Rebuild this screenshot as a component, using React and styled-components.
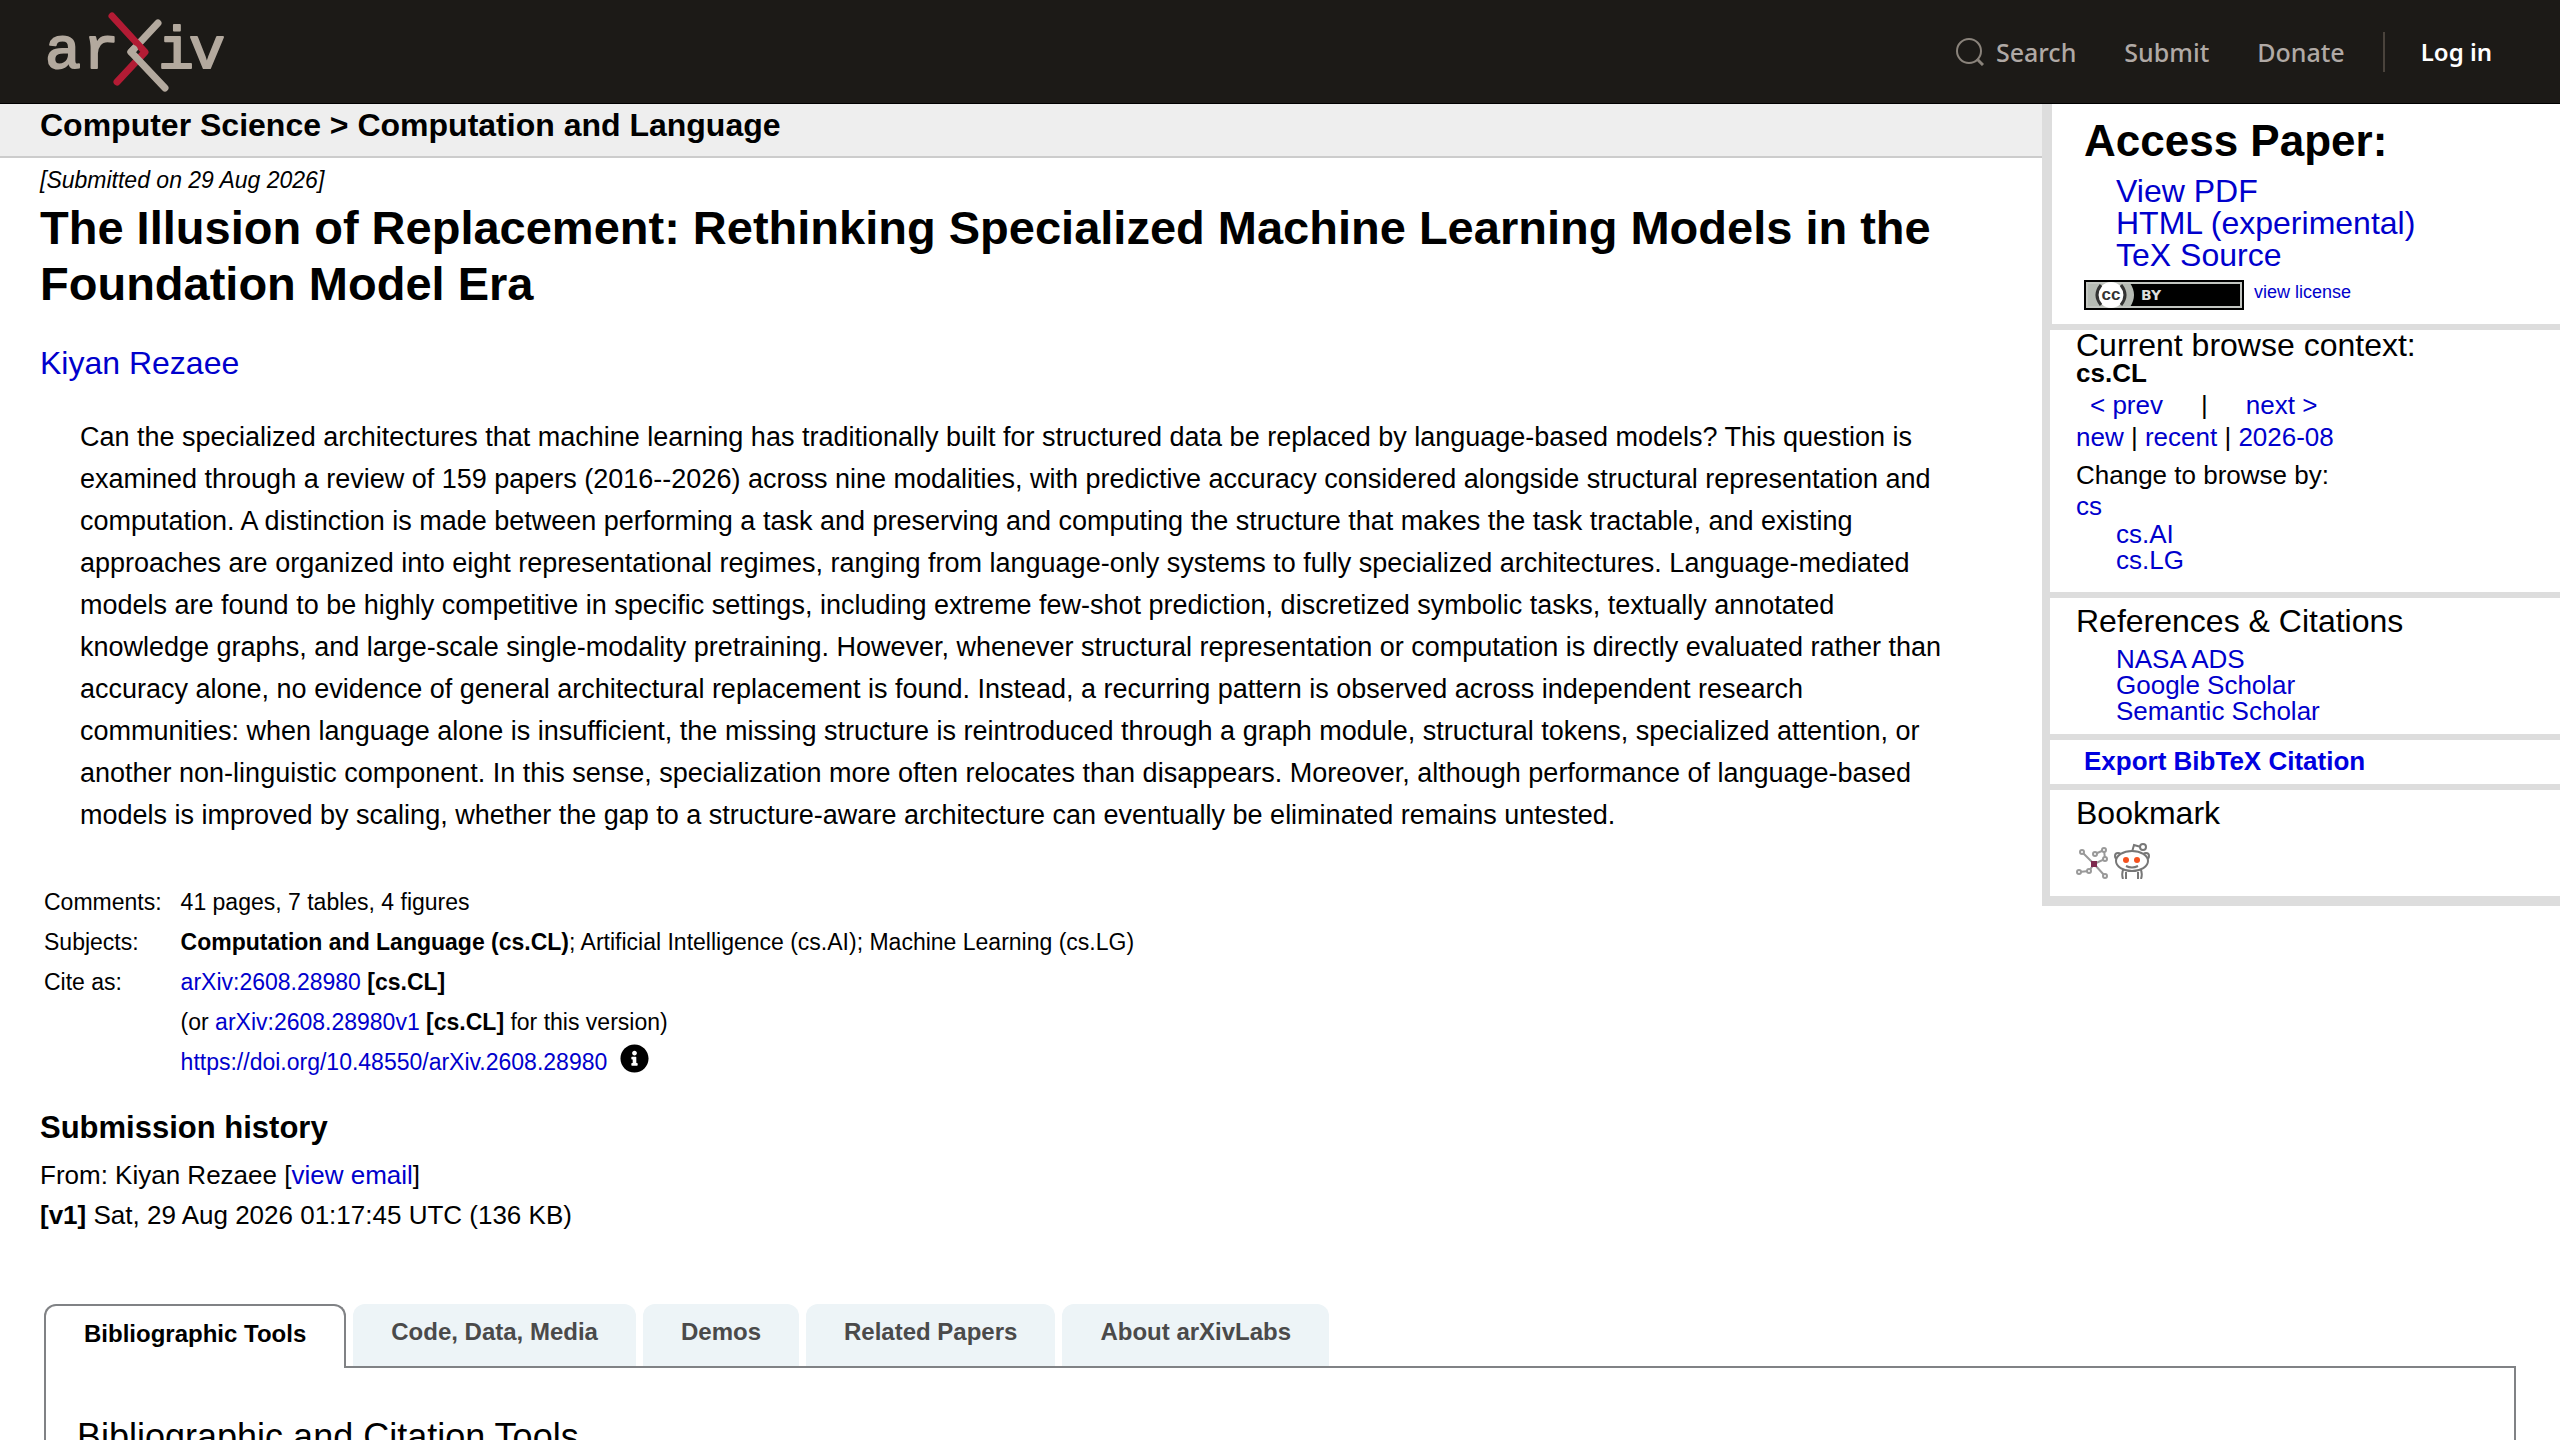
import React, { useState } from 'react';
import styled, { createGlobalStyle } from 'styled-components';
import { FaInfoCircle } from 'react-icons/fa';

const GlobalStyle = createGlobalStyle`
  * {
    box-sizing: border-box;
  }

  body {
    margin: 0;
    background: #fff;
    color: #000;
    font-family: "Liberation Sans", Helvetica, Arial, sans-serif;
    font-size: 26px;
  }
`;

const Page = styled.div`
  height: 100vh;
  overflow: hidden;
`;

const Link = styled.a`
  color: #0000cc;
  text-decoration: none;
`;

const Header = styled.header`
  display: flex;
  align-items: center;
  justify-content: space-between;
  height: 104px;
  padding: 0 68px 0 40px;
  background: #1c1a17;
  border-bottom: 1px solid #000;
`;

const LogoLink = styled.a`
  display: flex;
`;

const Nav = styled.nav`
  display: flex;
  align-items: center;
  gap: 48px;
  font-family: "Noto Sans", sans-serif;
`;

const NavLink = styled.a`
  display: flex;
  align-items: center;
  gap: 12px;
  color: ${props => (props.$strong ? '#fff' : '#b0a9a5')};
  font-size: ${props => (props.$strong ? 24 : 25)}px;
  font-weight: ${props => (props.$strong ? 600 : 500)};
  line-height: 40px;
  text-decoration: none;
`;

const LoginArea = styled.div`
  padding-left: 36px;
  margin-left: -10px;
  border-left: 2px solid #4a433c;
`;

const Columns = styled.div`
  display: flex;
  align-items: flex-start;
`;

const Main = styled.main`
  flex: 1;
  min-width: 0;
`;

const SubjectBar = styled.div`
  padding: 3px 40px 13px;
  background: #eee;
  border-bottom: 2px solid #ccc;
  font-size: 32px;
  font-weight: bold;
  line-height: 36px;
`;

const Article = styled.article`
  padding: 7px 40px 0;
`;

const Dateline = styled.div`
  font-size: 23px;
  font-style: italic;
  line-height: 30px;
`;

const Title = styled.h1`
  margin: 5px 0 32px;
  font-size: 47px;
  line-height: 56px;
`;

const Authors = styled.div`
  font-size: 32px;
  line-height: 38px;
`;

const Abstract = styled.blockquote`
  margin: 34px 44px 46px 40px;
  font-size: 27px;
  line-height: 42px;
`;

const MetaTable = styled.table`
  border-collapse: collapse;
  font-size: 23px;
  line-height: 40px;

  th,
  td {
    padding: 0 4px;
    font-weight: normal;
    text-align: left;
    vertical-align: top;
  }

  th {
    padding-right: 15px;
  }
`;

const InfoIcon = styled(FaInfoCircle)`
  margin-left: 13px;
  vertical-align: -3px;
  font-size: 29px;
`;

const HistoryTitle = styled.h2`
  margin: 28px 0 9px;
  font-size: 31px;
  line-height: 36px;
`;

const HistoryLine = styled.div`
  line-height: 40px;
`;

const Sidebar = styled.aside`
  flex: 0 0 518px;
  border-left: 8px solid #ddd;
  border-bottom: 4px solid #ddd;
`;

const Box = styled.section`
  padding: ${props => props.$pad};
  border-bottom: 6px solid #ddd;
`;

const AccessBox = styled(Box)`
  border-left: 2px solid #ddd;
`;

const AccessTitle = styled.h2`
  margin: 0 0 9px;
  font-size: 44px;
  line-height: 50px;
`;

const BoxTitle = styled.h3`
  margin: 0;
  font-size: 32px;
  font-weight: normal;
  line-height: ${props => (props.$tight ? 30 : 36)}px;
`;

const LinkList = styled.ul`
  margin: 0;
  padding: 0 0 0 ${props => (props.$large ? 32 : 40)}px;
  list-style: none;
  font-size: ${props => (props.$large ? 32 : 26)}px;
  line-height: ${props => (props.$large ? 32 : 26)}px;
`;

const RefList = styled(LinkList)`
  margin-top: 7px;
`;

const License = styled.div`
  display: flex;
  gap: 10px;
  margin-top: 9px;
  font-size: 18px;
  line-height: 24px;
`;

const Context = styled.div`
  font-weight: bold;
  line-height: 26px;
`;

const BrowseLine = styled.div`
  line-height: 32px;
`;

const PrevNext = styled(BrowseLine)`
  display: flex;
  gap: 38px;
  margin-top: 3px;
  padding-left: 14px;
`;

const ChangeLine = styled(BrowseLine)`
  margin-top: 6px;
`;

const ArchiveLine = styled(BrowseLine)`
  line-height: 30px;
`;

const ExportButton = styled.button`
  display: block;
  padding: 0 8px;
  border: 0;
  background: none;
  color: #0000e0;
  font: bold 26px "Liberation Sans", Helvetica, Arial, sans-serif;
  line-height: 30px;
  cursor: pointer;
`;

const Bookmarks = styled.div`
  display: flex;
  align-items: flex-end;
  gap: 6px;
  margin-top: 12px;

  a {
    display: flex;
  }
`;

const Labs = styled.section`
  margin: 69px 44px 0;
`;

const TabList = styled.div`
  display: flex;
  gap: 7px;
`;

const Tab = styled.button`
  position: relative;
  display: block;
  padding: 13px 38px 19px;
  border: 0 solid #808285;
  border-width: ${props => (props.$active ? '2px 2px 0' : '0')};
  border-radius: 12px 12px 0 0;
  margin-bottom: ${props => (props.$active ? '-2px' : '0')};
  background: ${props => (props.$active ? '#fff' : '#edf4f7')};
  color: ${props => (props.$active ? '#000' : '#4a4a4a')};
  font: bold 24px "Liberation Sans", Helvetica, Arial, sans-serif;
  line-height: 30px;
  cursor: pointer;
`;

const Panel = styled.div`
  padding: 47px 31px 80px;
  border: 2px solid #808285;
`;

const PanelTitle = styled.h2`
  margin: 0;
  font-size: 36px;
  font-weight: normal;
  line-height: 44px;
`;

const ArxivLogo = () => (
  <svg width="190" height="90" viewBox="40 8 190 90" role="img" aria-label="arXiv">
    <g fill="#b3a99e" stroke="#b3a99e" strokeWidth="2" strokeLinejoin="round" fontFamily="Liberation Mono, monospace" fontSize="60">
      <text x="45 83" y="69">ar</text>
      <text x="158 189" y="69">iv</text>
    </g>
    <g fill="none" strokeWidth="7" strokeLinecap="round" strokeLinejoin="round">
      <path d="M158 24L131 53" stroke="#b3a99e" />
      <path d="M112 17L145 53L117 83" stroke="#b31b34" />
      <path d="M134 50L131 53L165 89" stroke="#b3a99e" />
    </g>
  </svg>
);

const SearchIcon = () => (
  <svg width="28" height="28" viewBox="0 0 28 28" fill="none" stroke="#8a837b" strokeWidth="2">
    <circle cx="13" cy="13" r="12" />
    <path d="M21 21L27 27" strokeWidth="3" />
  </svg>
);

const CcBadge = () => (
  <svg width="160" height="30" viewBox="0 0 160 30" role="img" aria-label="CC BY">
    <rect width="160" height="30" fill="#000" />
    <path d="M3 3H46Q54 15 46 27H3Z" fill="#b5bab3" />
    <rect x="3" y="3" width="154" height="24" fill="none" stroke="#c3c6c1" strokeWidth="2" />
    <circle cx="27" cy="15" r="13" fill="#fff" />
    <path d="M17 5Q9 15 17 25M37 5Q45 15 37 25" fill="none" stroke="#333" strokeWidth="3" />
    <text x="27" y="20" textAnchor="middle" fill="#333" fontFamily="Liberation Sans, sans-serif" fontSize="17" fontWeight="bold">cc</text>
    <text x="57" y="20" fill="#ddd" fontFamily="DejaVu Sans, sans-serif" fontSize="14" fontWeight="bold">BY</text>
  </svg>
);

const BibSonomyIcon = () => (
  <svg width="32" height="32" viewBox="0 0 32 32" fill="#fff" stroke="#999" strokeWidth="2">
    <path d="M18 17L6 5M18 17L29 29M18 17L29 12L28 3L19 7M18 17L13 24L3 25" fill="none" />
    <circle cx="6" cy="5" r="2" />
    <circle cx="19" cy="7" r="2" />
    <circle cx="28" cy="3" r="2" />
    <circle cx="29" cy="12" r="2" />
    <circle cx="3" cy="25" r="2" />
    <circle cx="13" cy="24" r="2" />
    <circle cx="29" cy="29" r="2" />
    <rect x="15" y="14" width="6" height="6" fill="#7d2a4e" stroke="none" />
  </svg>
);

const RedditIcon = () => (
  <svg width="36" height="36" viewBox="0 0 36 36" fill="#fff" stroke="#777" strokeWidth="2">
    <path d="M18 9L20 2L27 4" fill="none" />
    <circle cx="29" cy="4" r="3" />
    <circle cx="4" cy="13" r="3" />
    <circle cx="32" cy="13" r="3" />
    <path d="M10 25Q7 30 9 36M26 25Q29 30 27 36M12 29V36M24 29V36" fill="none" />
    <ellipse cx="18" cy="18" rx="16" ry="10" />
    <path d="M12 23Q18 26 24 23" fill="none" />
    <circle cx="12" cy="17" r="3" fill="#f4511e" stroke="none" />
    <circle cx="23" cy="17" r="3" fill="#f4511e" stroke="none" />
  </svg>
);

const tabs = ['Bibliographic Tools', 'Code, Data, Media', 'Demos', 'Related Papers', 'About arXivLabs'];

const App = () => {
  const [activeTab, setActiveTab] = useState(tabs[0]);

  return (
    <Page>
      <GlobalStyle />
      <Header>
        <LogoLink href="#"><ArxivLogo /></LogoLink>
        <Nav>
          <NavLink href="#"><SearchIcon />Search</NavLink>
          <NavLink href="#">Submit</NavLink>
          <NavLink href="#">Donate</NavLink>
          <LoginArea>
            <NavLink href="#" $strong>Log in</NavLink>
          </LoginArea>
        </Nav>
      </Header>
      <Columns>
        <Main>
          <SubjectBar>Computer Science &gt; Computation and Language</SubjectBar>
          <Article>
            <Dateline>[Submitted on 29 Aug 2026]</Dateline>
            <Title>
              The Illusion of Replacement: Rethinking Specialized Machine Learning Models in the Foundation Model Era
            </Title>
            <Authors><Link href="#">Kiyan Rezaee</Link></Authors>
            <Abstract>
              Can the specialized architectures that machine learning has traditionally built for structured data be
              replaced by language-based models? This question is examined through a review of 159 papers
              (2016--2026) across nine modalities, with predictive accuracy considered alongside structural
              representation and computation. A distinction is made between performing a task and preserving and
              computing the structure that makes the task tractable, and existing approaches are organized into eight
              representational regimes, ranging from language-only systems to fully specialized architectures.
              Language-mediated models are found to be highly competitive in specific settings, including extreme
              few-shot prediction, discretized symbolic tasks, textually annotated knowledge graphs, and large-scale
              single-modality pretraining. However, whenever structural representation or computation is directly
              evaluated rather than accuracy alone, no evidence of general architectural replacement is found.
              Instead, a recurring pattern is observed across independent research communities: when language alone
              is insufficient, the missing structure is reintroduced through a graph module, structural tokens,
              specialized attention, or another non-linguistic component. In this sense, specialization more often
              relocates than disappears. Moreover, although performance of language-based models is improved by
              scaling, whether the gap to a structure-aware architecture can eventually be eliminated remains
              untested.
            </Abstract>
            <MetaTable>
              <tbody>
                <tr>
                  <th scope="row">Comments:</th>
                  <td>41 pages, 7 tables, 4 figures</td>
                </tr>
                <tr>
                  <th scope="row">Subjects:</th>
                  <td>
                    <b>Computation and Language (cs.CL)</b>; Artificial Intelligence (cs.AI); Machine Learning (cs.LG)
                  </td>
                </tr>
                <tr>
                  <th scope="row">Cite as:</th>
                  <td><Link href="#">arXiv:2608.28980</Link> <b>[cs.CL]</b></td>
                </tr>
                <tr>
                  <th />
                  <td>(or <Link href="#">arXiv:2608.28980v1</Link> <b>[cs.CL]</b> for this version)</td>
                </tr>
                <tr>
                  <th />
                  <td>
                    <Link href="#">https://doi.org/10.48550/arXiv.2608.28980</Link>
                    <InfoIcon />
                  </td>
                </tr>
              </tbody>
            </MetaTable>
            <HistoryTitle>Submission history</HistoryTitle>
            <HistoryLine>From: Kiyan Rezaee [<Link href="#">view email</Link>]</HistoryLine>
            <HistoryLine><b>[v1]</b> Sat, 29 Aug 2026 01:17:45 UTC (136 KB)</HistoryLine>
          </Article>
        </Main>
        <Sidebar>
          <AccessBox $pad="12px 26px 14px 32px">
            <AccessTitle>Access Paper:</AccessTitle>
            <LinkList $large>
              <li><Link href="#">View PDF</Link></li>
              <li><Link href="#">HTML (experimental)</Link></li>
              <li><Link href="#">TeX Source</Link></li>
            </LinkList>
            <License>
              <CcBadge />
              <Link href="#">view license</Link>
            </License>
          </AccessBox>
          <Box $pad="0 26px 19px">
            <BoxTitle $tight>Current browse context:</BoxTitle>
            <Context>cs.CL</Context>
            <PrevNext>
              <Link href="#">&lt; prev</Link>
              <span>|</span>
              <Link href="#">next &gt;</Link>
            </PrevNext>
            <BrowseLine>
              <Link href="#">new</Link> | <Link href="#">recent</Link> | <Link href="#">2026-08</Link>
            </BrowseLine>
            <ChangeLine>Change to browse by:</ChangeLine>
            <ArchiveLine><Link href="#">cs</Link></ArchiveLine>
            <LinkList>
              <li><Link href="#">cs.AI</Link></li>
              <li><Link href="#">cs.LG</Link></li>
            </LinkList>
          </Box>
          <Box $pad="5px 26px 10px">
            <BoxTitle>References &amp; Citations</BoxTitle>
            <RefList>
              <li><Link href="#">NASA ADS</Link></li>
              <li><Link href="#">Google Scholar</Link></li>
              <li><Link href="#">Semantic Scholar</Link></li>
            </RefList>
          </Box>
          <Box $pad="6px 26px 8px">
            <ExportButton type="button">Export BibTeX Citation</ExportButton>
          </Box>
          <Box $pad="5px 26px 17px">
            <BoxTitle>Bookmark</BoxTitle>
            <Bookmarks>
              <a href="#" aria-label="BibSonomy"><BibSonomyIcon /></a>
              <a href="#" aria-label="Reddit"><RedditIcon /></a>
            </Bookmarks>
          </Box>
        </Sidebar>
      </Columns>
      <Labs>
        <TabList role="tablist">
          {tabs.map(tab => (
            <Tab
              key={tab}
              type="button"
              role="tab"
              aria-selected={tab === activeTab}
              $active={tab === activeTab}
              onClick={() => setActiveTab(tab)}
            >
              {tab}
            </Tab>
          ))}
        </TabList>
        <Panel role="tabpanel">
          <PanelTitle>Bibliographic and Citation Tools</PanelTitle>
        </Panel>
      </Labs>
    </Page>
  );
}

export default App;
